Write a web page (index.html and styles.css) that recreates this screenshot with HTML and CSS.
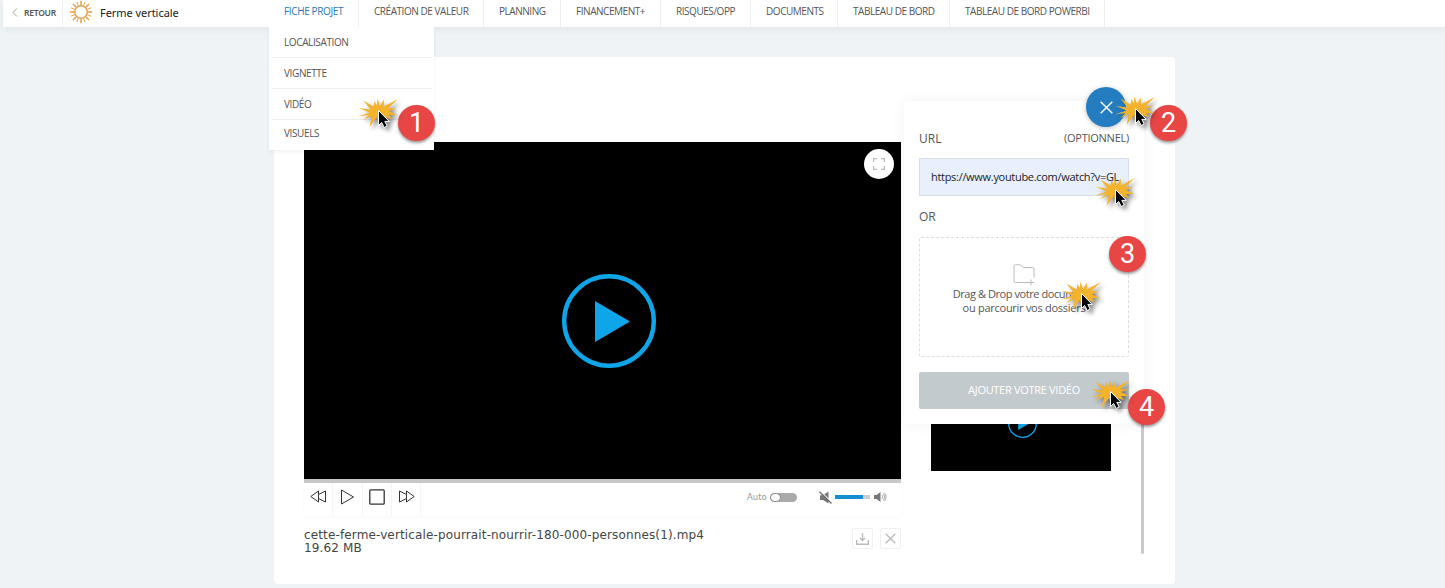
FILE: index.html
```html
<!DOCTYPE html>
<html lang="fr">
<head>
<meta charset="utf-8">
<title>Ferme verticale</title>
<link rel="stylesheet" href="styles.css">
</head>
<body>
<svg class="defs" width="0" height="0">
  <symbol id="burst" viewBox="0 0 44 34" overflow="visible">
    <path d="M-1 17.500L10.500 13.500L0 9L11.500 10.500L4.500 1.500L14.500 7.500L15.500 2L17.800 6.500L18.500 -.5L21 7L25 .5L24.800 7.500L39 0L29.500 9L37 9.500L30 12L38 16L30 16L33 20L26 18L27 23L22.500 19L20 24L18 18L10.500 28L13 17L4 21L10 16Z" fill="#f4b32c"/>
    <path d="M19.500 11.500V26.500l3.200-3 2.500 5 3-1.500-2.400-4.600h4.400z" fill="#000" stroke="#fff" stroke-width="1"/>
  </symbol>
  <symbol id="play" viewBox="0 0 94 94">
    <circle cx="47" cy="47" r="44.800" fill="none" stroke="#0ea5e9" stroke-width="4.400"/>
    <path d="M33 27V68L68 47.500Z" fill="#0ea5e9"/>
  </symbol>
</svg>

<header class="topbar">
  <a class="back"><svg width="6" height="9" viewBox="0 0 6 9"><path d="M5 .5L1 4.500 5 8.500" fill="none" stroke="#888" stroke-width=".8"/></svg><span class="back-text">RETOUR</span></a>
  <div class="project">
    <svg width="24" height="24" viewBox="-12 -12 24 24" fill="none" stroke="#e5a04b" stroke-width="1.500"><circle r="6.300"/><path d="M0-7V-11.300M0 7V11.300M-7 0H-11.300M7 0H11.300M5-5L8-8M-5-5L-8-8M5 5L8 8M-5 5L-8 8" /><path stroke-width="1" d="M2.700-6.500L4.200-10M-2.700-6.500L-4.200-10M2.700 6.500L4.200 10M-2.700 6.500L-4.200 10M6.500-2.700L10-4.200M6.500 2.700L10 4.200M-6.500-2.700L-10-4.200M-6.500 2.700L-10 4.200"/></svg>
    <span class="project-name">Ferme verticale</span>
  </div>
  <nav class="nav">
    <a class="active"><span>FICHE PROJET</span></a><a><span>CRÉATION DE VALEUR</span></a><a><span>PLANNING</span></a><a><span>FINANCEMENT+</span></a><a><span>RISQUES/OPP</span></a><a><span>DOCUMENTS</span></a><a><span>TABLEAU DE BORD</span></a><a><span>TABLEAU DE BORD POWERBI</span></a>
    <div class="menu"><a>LOCALISATION</a><a>VIGNETTE</a><a>VIDÉO</a><a>VISUELS</a></div>
  </nav>
</header>

<main class="card">
  <section class="player">
    <div class="screen">
      <svg width="94" height="94"><use href="#play"/></svg>
      <button class="full"><svg width="12" height="12" viewBox="0 0 12 12" fill="none" stroke="#bbb" stroke-width="1.200"><path d="M.6 4V.6H4M8 .6h3.400V4M11.400 8v3.400H8M4 11.400H.6V8"/></svg></button>
    </div>
    <div class="progress"></div>
    <div class="controls">
      <div class="buttons">
        <a><svg width="17" height="13" viewBox="0 0 17 13"><path d="M.8 6.500L8.500 1V4.500L15.500 1V12L8.500 8.500V12ZM8.500 4.500V8.500"/></svg></a>
        <a><svg width="15" height="16" viewBox="0 0 15 16"><path d="M1.500 1V15L13.500 8Z"/></svg></a>
        <a><svg width="16" height="16" viewBox="0 0 16 16"><rect x=".8" y=".8" width="14.400" height="14.400" rx="1" stroke-width="1.300"/></svg></a>
        <a><svg width="17" height="13" viewBox="0 0 17 13"><path d="M16.200 6.500L8.500 1V4.500L1.500 1V12L8.500 8.500V12ZM8.500 4.500V8.500"/></svg></a>
      </div>
      <div class="sound">
        <span class="auto">Auto</span>
        <span class="switch"><i></i></span>
        <svg class="mute" width="13" height="13" viewBox="0 0 13 13"><path d="M1 4.300H4L9.500 .5V12.500L4 9H1Z" fill="#777"/><path d="M1.300 .3L13 11.500" stroke="#fff" stroke-width="1.200"/><path d="M.5 .7L12.500 12.500" stroke="#666" stroke-width="1.200"/></svg>
        <span class="volume"><i></i></span>
        <svg width="13" height="10" viewBox="0 0 13 10"><path d="M0 3H2.500L6.500 0V10L2.500 7H0Z" fill="#777"/><path d="M8 3q1.500 2 0 4M9.500 1.500q2.400 3.500 0 7M10.800.8q2.800 4.200 0 8.400" fill="none" stroke="#999" stroke-width=".8"/></svg>
      </div>
    </div>
    <div class="file">
      <div class="file-info"><div class="file-name">cette-ferme-verticale-pourrait-nourrir-180-000-personnes(1).mp4</div><div>19.62 MB</div></div>
      <div class="file-actions">
        <a><svg width="13" height="12" viewBox="0 0 13 12"><path d="M.7 7V11.300H12.300V7M6.500 0V7.500M4 5L6.500 7.500 9 5" /></svg></a>
        <a><svg width="11" height="11" viewBox="0 0 11 11"><path d="M.7.7L10.300 10.300M10.300.7L.7 10.300"/></svg></a>
      </div>
    </div>
  </section>
  <aside class="playlist">
    <div class="thumb"><svg width="29" height="29"><use href="#play"/></svg></div>
    <div class="scrollbar"></div>
  </aside>

  <form class="upload">
    <div class="labels"><span class="url">URL</span><span class="opt">(OPTIONNEL)</span></div>
    <div class="field"><span>https://www.youtube.com/watch?v=GL</span></div>
    <div class="or">OR</div>
    <div class="drop">
      <svg width="23" height="22" viewBox="0 0 23 22" fill="none" stroke="#bbb"><path d="M15 18.500H2.500Q1 18.500 1 17V2Q1 .8 2.500 .8H7.500L10 3.500H19.500Q21 3.500 21 5V13.500M18 15.500V21.500M15 18.500H21"/></svg>
      <span class="drop-one">Drag &amp; Drop votre documents</span><span class="drop-two">ou parcourir vos dossiers</span>
    </div>
    <button type="button" class="submit"><span>AJOUTER VOTRE VIDÉO</span></button>
    <button type="button" class="close"><svg width="13" height="13" viewBox="0 0 13 13"><path d="M.7.7L12.300 12.300M12.300.7L.7 12.300" stroke="#fff" stroke-width="1.400"/></svg></button>
  </form>
</main>

<svg class="burst b1"><use href="#burst"/></svg><b class="step s1">1</b>
<svg class="burst b2"><use href="#burst"/></svg><b class="step s2">2</b>
<svg class="burst b3"><use href="#burst"/></svg>
<svg class="burst b4"><use href="#burst"/></svg><b class="step s3">3</b>
<svg class="burst b5"><use href="#burst"/></svg><b class="step s4">4</b>
</body>
</html>
```
FILE: styles.css
```css
* { box-sizing: border-box; }
body { margin: 0; height: 588px; overflow: hidden; position: relative; background: #eff3f5; font-family: "Open Sans", "Noto Sans", sans-serif; color: #555; }
svg { display: block; flex: none; }
button { border: 0; padding: 0; display: flex; align-items: center; justify-content: center; font-family: inherit; }
span { white-space: nowrap; }
.defs { position: absolute; }

.topbar { height: 27px; margin: 0 0 30px 3px; display: flex; background: #fff; box-shadow: 0 2px 7px rgba(40,60,70,.07); }
.back { width: 60px; height: 27px; padding: 0 0 3px 9px; display: flex; align-items: center; gap: 6px; border-right: 1px solid #f0f0f0; font: 600 8.500px "Noto Sans", sans-serif; letter-spacing: -.25px; }
.project { width: 206px; height: 24px; padding-left: 6px; display: flex; align-items: center; gap: 7px; color: #222; font: 11px "Noto Sans", sans-serif; }
.project-name { letter-spacing: -.05px; }
.nav { position: relative; display: grid; grid-template-columns: 90px 125px 77px 100px 90px 87px 112px 155px; font-size: 10px; letter-spacing: -.45px; }
.nav > a { height: 27px; padding-left: 15px; line-height: 23px; border-right: 1px solid #eee; }
.nav > .active { color: #2876b5; letter-spacing: -.36px; }
.menu { position: absolute; left: 0; top: 27px; z-index: 3; width: 165px; height: 123px; padding: 0 2px 0 3px; background: #fff; box-shadow: 0 2px 4px rgba(0,0,0,.06); display: grid; grid-template-rows: 31px 31px 31px 30px; letter-spacing: -.38px; }
.menu a { padding-left: 12px; line-height: 30px; border-bottom: 1px solid #eee; }
.menu a:last-child { border: 0; line-height: 27px; }

.card { position: relative; width: 901px; height: 527px; margin-left: 274px; padding: 85px 30px 0; background: #fff; border-radius: 4px; display: flex; gap: 30px; }
.player { width: 597px; }
.screen { position: relative; height: 337px; background: #000; padding: 132px 0 0 258px; }
.full { position: absolute; right: 7px; top: 7px; width: 30px; height: 30px; border-radius: 50%; background: #fff; }
.progress { height: 4px; background: #c8c8c8; }
.controls { height: 33px; display: flex; justify-content: space-between; box-shadow: 0 2px 5px rgba(0,0,0,.025); }
.buttons { display: grid; grid-template-columns: 29px 30px 29px 29px; }
.buttons a { display: flex; align-items: center; justify-content: center; border-right: 1px solid #f4f4f4; padding-bottom: 6px; }
.buttons svg { fill: none; stroke: #333; stroke-width: 1; }
.sound { height: 28px; display: flex; align-items: center; padding-right: 14px; }
.auto { width: 23px; font: 8.500px "DejaVu Sans", sans-serif; color: #999; }
.switch { width: 27px; height: 9px; margin-right: 22px; border-radius: 5px; background: #aaa; }
.switch i { display: block; width: 11px; height: 9px; border: 1px solid #888; border-radius: 5px; background: #fff; }
.volume { width: 35px; height: 4px; margin: 0 4px 0 3px; background: #ccc; }
.volume i { display: block; width: 28px; height: 4px; background: #148fcf; }
.file { display: flex; justify-content: space-between; padding-top: 12px; }
.file-info { padding-top: 1px; color: #444; font: 12px/13px "DejaVu Sans", sans-serif; letter-spacing: .135px; }
.file-actions { display: flex; gap: 7px; }
.file-actions a { width: 21px; height: 21px; border: 1px solid #f0f0f0; border-radius: 2px; display: flex; align-items: center; justify-content: center; }
.file-actions svg { fill: none; stroke: #bbb; stroke-width: 1.400; }

.playlist { width: 213px; height: 412px; display: flex; justify-content: space-between; align-items: flex-end; }
.thumb { width: 180px; height: 101px; margin-bottom: 83px; background: #000; display: flex; justify-content: center; padding: 39px 0 0 3px; }
.scrollbar { width: 3px; height: 390px; border-radius: 2px; background: #c7c9cc; }

.upload { position: absolute; left: 630px; top: 44px; width: 240px; height: 323px; padding: 28px 15px 15px; background: #fff; box-shadow: 0 0 14px rgba(0,0,0,.055); font-size: 12px; display: flex; flex-direction: column; }
.labels { height: 29px; line-height: 19px; display: flex; justify-content: space-between; }
.opt { font-size: 11px; line-height: 18px; letter-spacing: -.25px; }
.field { height: 38px; padding-left: 11px; border: 1px solid #d8dfe6; background: #e8f0fe; color: #222; font-size: 11px; line-height: 36px; letter-spacing: -.3px; }
.or { height: 41px; line-height: 41px; }
.drop { height: 120px; border: 1px dashed #ddd; border-radius: 2px; display: flex; flex-direction: column; align-items: center; padding-top: 26px; font-size: 11px; line-height: 14px; }
.drop-one { letter-spacing: -.43px; }
.drop-two { letter-spacing: -.27px; }
.drop svg { margin-bottom: 1px; }
.submit { height: 37px; margin-top: 15px; padding-bottom: 2px; border-radius: 2px; background: #c3cace; color: #fff; font-size: 11px; letter-spacing: -.3px; }
.close { position: absolute; left: 182px; top: -14px; width: 40px; height: 40px; border-radius: 50%; background: #237dc0; box-shadow: 0 1px 5px rgba(0,0,0,.25); }

.burst { position: absolute; z-index: 6; width: 44px; height: 34px; overflow: visible; filter: drop-shadow(3px 3px 2px rgba(0,0,0,.45)); }
.b1 { left: 359px; top: 99px; }
.b2 { left: 1116px; top: 97px; }
.b3 { left: 1096px; top: 178px; }
.b4 { left: 1062px; top: 282px; }
.b5 { left: 1091px; top: 380px; }
.step { position: absolute; z-index: 5; width: 37px; height: 36px; border-radius: 50%; background: #e84545; box-shadow: 0 2px 3px rgba(0,0,0,.4); color: #fff; font: 400 27px/36px Roboto, "Liberation Sans", sans-serif; text-align: center; }
.s1 { left: 398px; top: 105px; }
.s2 { left: 1150px; top: 105px; }
.s3 { left: 1109px; top: 236px; }
.s4 { left: 1128px; top: 389px; }
```
